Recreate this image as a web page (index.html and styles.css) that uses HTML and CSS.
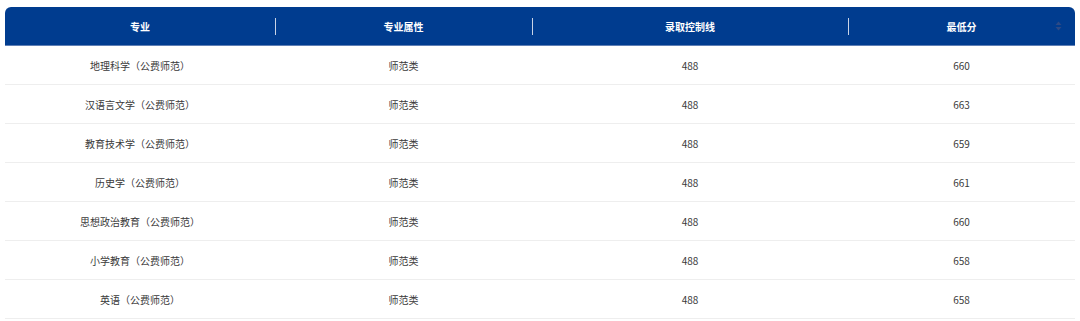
FILE: index.html
```html
<!DOCTYPE html>
<html lang="zh">
<head>
<meta charset="utf-8">
<link rel="stylesheet" href="styles.css">
</head>
<body>
<div class="wrap">
  <div class="table">
    <div class="row head">
      <div class="cell c1">专业</div>
      <div class="cell c2">专业属性</div>
      <div class="cell c3">录取控制线</div>
      <div class="cell c4">最低分
        <span class="sort"><svg width="7" height="10" viewBox="0 0 7 10"><path d="M3.5 0.5 L6.5 4 H0.5 Z" fill="#2c4a86"/><path d="M3.5 9.5 L6.5 6 H0.5 Z" fill="#2c4a86"/></svg></span>
      </div>
    </div>
    <div class="row"><div class="cell c1">地理科学（公费师范）</div><div class="cell c2">师范类</div><div class="cell c3">488</div><div class="cell c4">660</div></div>
    <div class="row"><div class="cell c1">汉语言文学（公费师范）</div><div class="cell c2">师范类</div><div class="cell c3">488</div><div class="cell c4">663</div></div>
    <div class="row"><div class="cell c1">教育技术学（公费师范）</div><div class="cell c2">师范类</div><div class="cell c3">488</div><div class="cell c4">659</div></div>
    <div class="row"><div class="cell c1">历史学（公费师范）</div><div class="cell c2">师范类</div><div class="cell c3">488</div><div class="cell c4">661</div></div>
    <div class="row"><div class="cell c1">思想政治教育（公费师范）</div><div class="cell c2">师范类</div><div class="cell c3">488</div><div class="cell c4">660</div></div>
    <div class="row"><div class="cell c1">小学教育（公费师范）</div><div class="cell c2">师范类</div><div class="cell c3">488</div><div class="cell c4">658</div></div>
    <div class="row"><div class="cell c1">英语（公费师范）</div><div class="cell c2">师范类</div><div class="cell c3">488</div><div class="cell c4">658</div></div>
  </div>
</div>
</body>
</html>
```
FILE: styles.css
```css
* { box-sizing: border-box; }
html, body { margin: 0; padding: 0; background: #fff; }
body {
  font-family: "Noto Sans CJK SC", "Noto Sans", sans-serif;
  font-size: 10px;
  color: #3a3a3a;
}
.wrap { padding: 7px 5px 0 5px; width: 1080px; }
.table { width: 1070px; }
.row {
  display: grid;
  grid-template-columns: 270px 257px 316px 227px;
  height: 39px;
  border-bottom: 1px solid #eeeeee;
  align-items: center;
}
.head {
  height: 39px;
  background: #003c8f;
  color: #fff;
  font-weight: bold;
  border-radius: 6px 6px 0 0;
  border-bottom: 1px solid #5f7fb5;
}
.cell {
  text-align: center;
  position: relative;
  height: 100%;
  display: flex;
  align-items: center;
  justify-content: center;
}
.head .cell + .cell::before {
  content: "";
  position: absolute;
  left: 0;
  top: 11px;
  height: 17px;
  width: 1px;
  background: #c9d3e6;
}
.sort {
  position: absolute;
  right: 13px;
  top: 14px;
  line-height: 0;
}
```
